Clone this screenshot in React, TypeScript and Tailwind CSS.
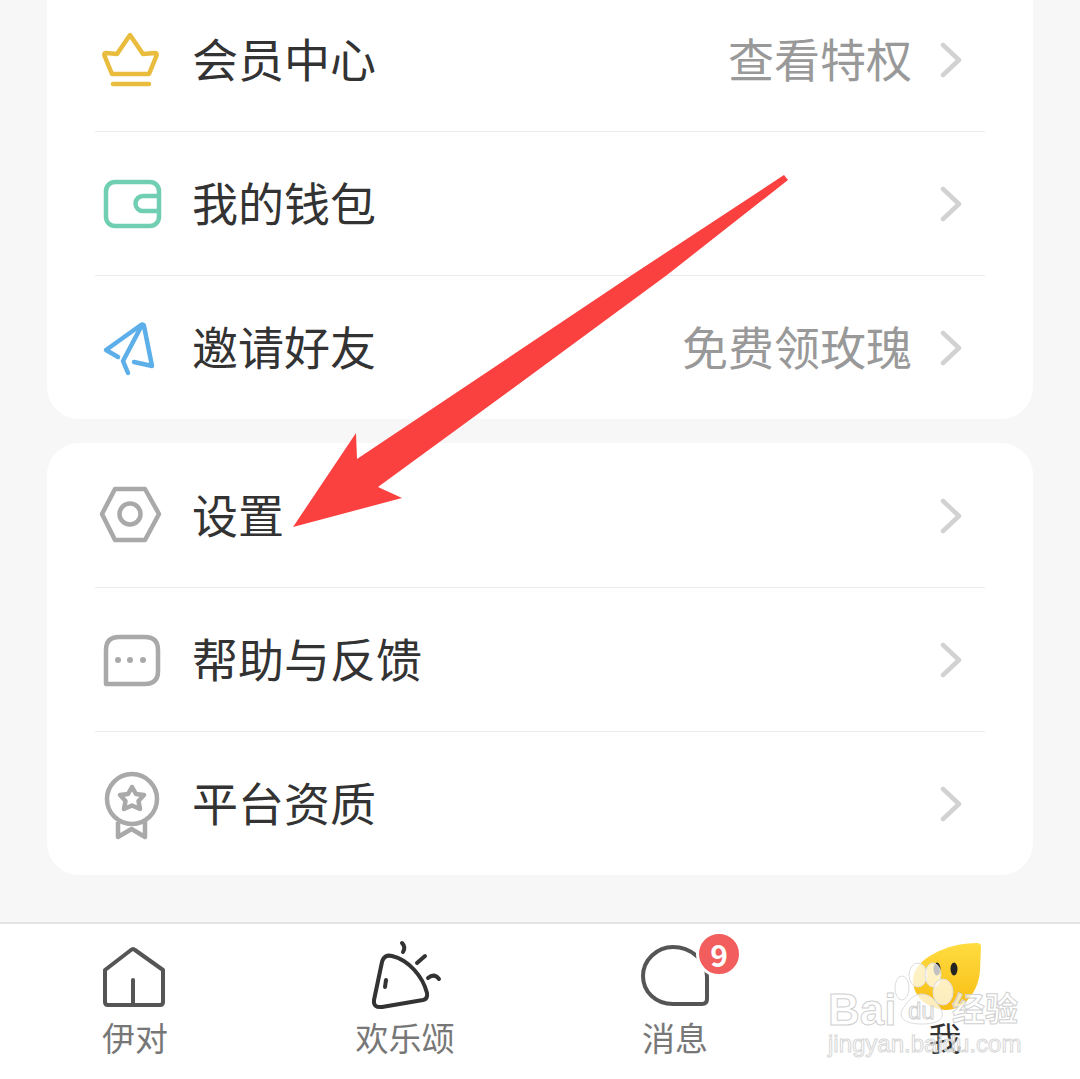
const font = "font-['Noto_Sans_CJK_SC','Noto_Sans',sans-serif]"

function Crown() {
  return (
    <svg viewBox="0 0 72 72" className="w-[72px] h-[72px]" fill="none" stroke="#e9bc3e" strokeWidth="4.5" strokeLinecap="round" strokeLinejoin="round">
      <path d="M35 11 L22 30 L11 29 C9 29 9 31 10 33 L17 50 L54 50 L61 33 C62 31 62 29 60 29 L48 30 Z" />
      <path d="M18 60 H54" />
    </svg>
  )
}

function Wallet() {
  return (
    <svg viewBox="0 0 72 72" className="w-[72px] h-[72px]" fill="none" stroke="#70cfb2" strokeWidth="4.5" strokeLinejoin="round">
      <rect x="11" y="14" width="53" height="44" rx="9" />
      <path d="M64 28 H48 A7.5 7.5 0 0 0 48 43 H64" />
    </svg>
  )
}

function Plane() {
  return (
    <svg viewBox="0 0 72 72" className="w-[72px] h-[72px]" fill="none" stroke="#5cafe9" strokeWidth="4.5" strokeLinecap="round" strokeLinejoin="round">
      <path d="M23 45 L11 38 L46 13 C48 12 49 13 49 14 L57 54 L39 50" />
      <path d="M47 13 L28 49 L33 61" />
    </svg>
  )
}

function Hexagon() {
  return (
    <svg viewBox="0 0 72 72" className="w-[72px] h-[72px]" fill="none" stroke="#a9a9a9" strokeWidth="4.5" strokeLinejoin="round">
      <path d="M7 34 L20 9 H50 L64 34 L50 60 H20 Z" />
      <circle cx="35" cy="34" r="10.5" />
    </svg>
  )
}

function Chat() {
  return (
    <svg viewBox="0 0 72 72" className="w-[72px] h-[72px]" fill="none" stroke="#a9a9a9" strokeWidth="4.5" strokeLinejoin="round">
      <path d="M11 60 V26 Q11 13 24 13 H50 Q63 13 63 26 V47 Q63 60 50 60 Z" />
      <circle cx="23" cy="36" r="3" fill="#a9a9a9" stroke="none" />
      <circle cx="35" cy="36" r="3" fill="#a9a9a9" stroke="none" />
      <circle cx="48" cy="36" r="3" fill="#a9a9a9" stroke="none" />
    </svg>
  )
}

function Medal() {
  return (
    <svg viewBox="0 0 72 72" className="w-[72px] h-[72px]" fill="none" stroke="#a9a9a9" strokeWidth="4.5" strokeLinejoin="round">
      <circle cx="37" cy="31" r="25" />
      <path d="M37 19 L41 26 L49 27 L43.5 33 L45 41 L37 37.5 L29 41 L30.5 33 L25 27 L33 26 Z" />
      <path d="M23 54 V69 L36.5 61 L50 69 V54" />
    </svg>
  )
}

function Chevron() {
  return (
    <svg viewBox="0 0 22 36" className="w-[22px] h-[36px]" fill="none" stroke="#d2d2d2" strokeWidth="4.5" strokeLinecap="round" strokeLinejoin="round">
      <path d="M3 3 L19 18 L3 33" />
    </svg>
  )
}

function Row({ icon, label, hint, last }: { icon: React.ReactNode; label: string; hint?: string; last?: boolean }) {
  return (
    <div className={`mx-[48px] flex items-center ${last ? "h-[143px]" : "h-[144px] border-b border-[#ebebeb]"}`}>
      <div className="w-[72px] h-[72px] shrink-0">{icon}</div>
      <span className="ml-[25px] pb-[5px] text-[46px] leading-none text-[#333333]">{label}</span>
      {hint && <span className="ml-auto pb-[5px] text-[46px] leading-none text-[#999999]">{hint}</span>}
      <div className={`${hint ? "ml-[28px]" : "ml-auto"} mr-[23px] shrink-0 flex`}>
        <Chevron />
      </div>
    </div>
  )
}

function HomeIcon() {
  return (
    <svg viewBox="0 0 80 80" className="w-[80px] h-[80px]" fill="none" stroke="#555555" strokeWidth="4" strokeLinecap="round" strokeLinejoin="round">
      <path d="M37 15 Q39 13 41 15 L69 35 V67 Q69 70 66 70 H14 Q11 70 11 67 V35 Z" transform="translate(-1 0)" />
      <path d="M38 45 V69" />
    </svg>
  )
}

function SunIcon() {
  return (
    <svg viewBox="0 0 80 80" className="w-[80px] h-[80px]" fill="none" stroke="#333333" strokeWidth="4" strokeLinecap="round" strokeLinejoin="round">
      <path d="M17 27 Q19 19 27 21 C44 25 58 42 62 58 Q63 64 58 65 L17 72 Q8 73 9 65 Z" />
      <path d="M21 45 L20 52" />
      <path d="M37 8 Q41 12 38 17" />
      <path d="M52 28 L60 21" />
      <path d="M63 43 Q69 38 74 44" />
    </svg>
  )
}

function MessageIcon() {
  return (
    <svg viewBox="0 0 80 80" className="w-[80px] h-[80px]" fill="none" stroke="#555555" strokeWidth="4" strokeLinejoin="round">
      <path d="M38 12 C22 12 8 25 8 41 C8 57 21 69 38 69 H67 Q72 69 72 64 V42 C72 25 55 12 38 12 Z" />
    </svg>
  )
}

function MeIcon() {
  return (
    <svg viewBox="0 0 80 80" className="w-[80px] h-[80px]">
      <defs>
        <linearGradient id="me" x1="0" y1="0" x2="0" y2="1">
          <stop offset="0" stopColor="#ffdc40" />
          <stop offset="1" stopColor="#f8bc12" />
        </linearGradient>
      </defs>
      <path d="M72 8 C42 8 8 24 8 45 C8 62 22 74 41 75 C60 75 74 55 75 35 L76 12 Q76 8 72 8 Z" fill="url(#me)" />
      <ellipse cx="32" cy="34" rx="3.5" ry="6.5" fill="#222222" />
      <ellipse cx="49" cy="34" rx="3.5" ry="6.5" fill="#222222" />
    </svg>
  )
}

function NavItem({ icon, label, active, badge }: { icon: React.ReactNode; label: string; active?: boolean; badge?: string }) {
  return (
    <div className="flex flex-col items-center pt-[11px]">
      <div className="relative w-[80px] h-[80px]">
        {icon}
        {badge && (
          <div className="absolute left-[61px] top-[-4px] w-[46px] h-[46px] rounded-full bg-[#f25d5d] border-[3px] border-white flex items-center justify-center text-[30px] leading-none font-bold text-white">
            {badge}
          </div>
        )}
      </div>
      <span className={`mt-[6px] text-[33px] leading-none ${active ? "text-[#333333]" : "text-[#777777]"}`}>{label}</span>
    </div>
  )
}

export default function App() {
  return (
    <div className={`relative h-[1079px] w-[1080px] overflow-hidden bg-[#f7f7f7] flex flex-col ${font}`}>
      {/* Account group */}
      <div className="mt-[-12px] mx-[47px] bg-white rounded-b-[32px]">
        <Row icon={<Crown />} label="会员中心" hint="查看特权" />
        <Row icon={<Wallet />} label="我的钱包" />
        <Row icon={<Plane />} label="邀请好友" hint="免费领玫瑰" last />
      </div>

      {/* Settings group */}
      <div className="mt-[24px] mx-[47px] pt-[1px] bg-white rounded-[32px]">
        <Row icon={<Hexagon />} label="设置" />
        <Row icon={<Chat />} label="帮助与反馈" />
        <Row icon={<Medal />} label="平台资质" last />
      </div>

      <div className="flex-1" />

      {/* Bottom nav */}
      <div className="h-[157px] shrink-0 bg-white border-t-[2px] border-[#e4e4e4] grid grid-cols-4">
        <NavItem icon={<HomeIcon />} label="伊对" />
        <NavItem icon={<SunIcon />} label="欢乐颂" />
        <NavItem icon={<MessageIcon />} label="消息" badge="9" />
        <NavItem icon={<MeIcon />} label="我" active />
      </div>

      {/* Red annotation arrow */}
      <svg viewBox="0 0 1080 1079" className="absolute left-0 top-0 w-[1080px] h-[1079px] pointer-events-none">
        <path d="M784 175 L632 275 L357 459 L356 433 L293 527 L402 498 L378 487 L542 367 L667 275 L788 180 Z" fill="#fb4040" />
      </svg>

      {/* Baidu watermark */}
      <div className="absolute left-[828px] top-[960px] w-[200px] h-[100px] pointer-events-none">
        <svg viewBox="0 0 200 100" className="absolute left-0 top-0 w-[200px] h-[100px]">
          <g fill="#ffffff" fillOpacity="0.72" stroke="#dddddd" strokeWidth="1">
            <ellipse cx="74" cy="28" rx="7" ry="12" />
            <ellipse cx="90" cy="15" rx="9" ry="12" />
            <ellipse cx="105" cy="15" rx="8" ry="12" />
            <ellipse cx="115" cy="32" rx="10" ry="13" />
            <path d="M94 34 C104 34 112 46 114 52 C116 60 108 64 94 64 C80 64 70 60 74 50 C78 44 84 34 94 34 Z" />
          </g>
        </svg>
        <span className="absolute left-0 top-[28px] text-[44px] leading-none font-bold font-['Liberation_Sans',sans-serif] text-white/70 [-webkit-text-stroke:1px_#d0d0d0]">Bai</span>
        <span className="absolute left-[80px] top-[39px] text-[24px] leading-none font-['Liberation_Sans',sans-serif] text-white/70 [-webkit-text-stroke:1px_#d0d0d0]">du</span>
        <span className="absolute left-[124px] top-[31px] text-[33px] leading-none font-bold text-white/70 [-webkit-text-stroke:1px_#d0d0d0]">经验</span>
        <span className="absolute left-0 top-[72px] text-[24px] leading-none font-['Liberation_Sans',sans-serif] text-white/60 [-webkit-text-stroke:1px_#d8d8d8]">jingyan.baidu.com</span>
      </div>
    </div>
  )
}
